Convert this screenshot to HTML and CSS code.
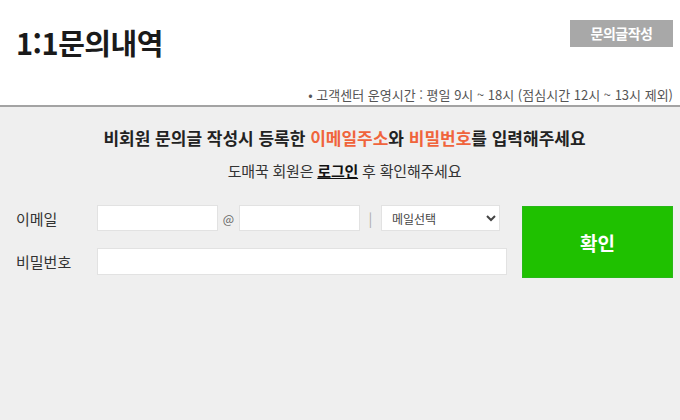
FILE: index.html
```html
<!doctype html>
<html lang="ko">
<head>
    <meta charset="UTF-8">
    <title>1:1문의내역</title>
    <link rel="stylesheet" href="styles.css">
</head>
<body>
<div class="page-head">
    <div class="head-top">
        <h1 class="page-title">1:1문의내역</h1>
        <a class="write-btn" href="#">문의글작성</a>
    </div>
    <p class="notice">• 고객센터 운영시간 : 평일 9시 ~ 18시 (점심시간 12시 ~ 13시 제외)</p>
</div>
<div class="guest-box">
    <p class="guest-tit">비회원 문의글 작성시 등록한 <em>이메일주소</em>와 <em>비밀번호</em>를 입력해주세요</p>
    <p class="guest-sub">도매꾹 회원은 <a href="#">로그인</a> 후 확인해주세요</p>
    <form class="guest-form" action="">
        <div class="form-fields">
            <div class="form-row">
                <label class="form-label" for="mailId">이메일</label>
                <input type="text" id="mailId" class="txt-input mail-input">
                <span class="at">@</span>
                <input type="text" class="txt-input mail-input">
                <span class="bar">|</span>
                <select class="mail-select">
                    <option>메일선택</option>
                </select>
            </div>
            <div class="form-row">
                <label class="form-label" for="pwArea">비밀번호</label>
                <input type="password" id="pwArea" class="txt-input pw-input">
            </div>
        </div>
        <button type="submit" class="ok-btn">확인</button>
    </form>
</div>
</body>
</html>
```

FILE: styles.css
```css
/*reset*/
body, h1, p, form, input, select, button {
    margin: 0;
    padding: 0;
}
body {
    font-family: "Noto Sans CJK KR", "Noto Sans", sans-serif;
    color: #222;
    background: #fff;
}
a { text-decoration: none; }
em { font-style: normal; }
/*/reset*/

.page-head {
    padding: 20px 7px 0 16px;
    border-bottom: 2px solid #a3a3a3;
}
.head-top {
    display: flex;
    justify-content: space-between;
    align-items: flex-start;
}
.page-title {
    margin-top: 5px;
    font-size: 29px;
    line-height: 34px;
    font-weight: bold;
    letter-spacing: -0.5px;
    color: #1a1a1a;
}
.write-btn {
    width: 103px;
    height: 27px;
    line-height: 27px;
    text-align: center;
    background-color: #a8a8a8;
    color: #fff;
    font-size: 14px;
    font-weight: bold;
    letter-spacing: -0.5px;
}
.notice {
    margin-top: 28px;
    padding-bottom: 2px;
    text-align: right;
    font-size: 13px;
    line-height: 16px;
    color: #555;
    letter-spacing: 0;
}

.guest-box {
    height: 313px;
    padding: 20px 7px 0 16px;
    background-color: #efefef;
    box-sizing: border-box;
}
.guest-tit {
    text-align: center;
    font-size: 17px;
    line-height: 22px;
    font-weight: bold;
    letter-spacing: 0;
}
.guest-tit em { color: #f0643c; }
.guest-sub {
    margin-top: 11px;
    text-align: center;
    font-size: 15px;
    line-height: 22px;
    color: #333;
    letter-spacing: -0.2px;
}
.guest-sub a {
    color: #111;
    font-weight: bold;
    text-decoration: underline;
}
.guest-form {
    display: flex;
    gap: 15px;
    margin-top: 23px;
}
.form-fields {
    display: flex;
    flex-direction: column;
    gap: 17px;
}
.form-row {
    display: flex;
    align-items: center;
}
.form-label {
    width: 81px;
    font-size: 15px;
    color: #333;
}
.txt-input {
    height: 26px;
    border: 1px solid #e2e2e2;
    background: #fff;
    box-sizing: border-box;
    outline: none;
}
.mail-input { width: 121px; }
.at {
    width: 21px;
    text-align: center;
    font-size: 12px;
    color: #666;
}
.bar {
    width: 21px;
    text-align: center;
    font-size: 14px;
    color: #aaa;
}
.mail-select {
    width: 119px;
    height: 26px;
    border: 1px solid #e2e2e2;
    background: #fff;
    padding-left: 6px;
    font-family: inherit;
    font-size: 12px;
    color: #444;
    box-sizing: border-box;
}
.pw-input { width: 410px; height: 27px; }
.ok-btn {
    width: 152px;
    height: 72px;
    margin-top: 1px;
    border: 1px solid #28b818;
    background-color: #1fc100;
    color: #fff;
    font-family: inherit;
    font-size: 19px;
    font-weight: bold;
}
```
